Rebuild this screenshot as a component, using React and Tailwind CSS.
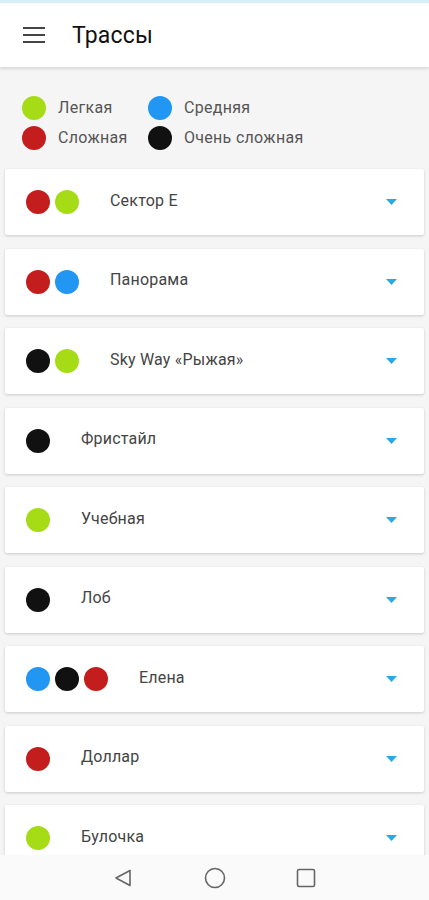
import React from "react";

const C = {
  g: "bg-[#a5dc16]",
  r: "bg-[#c41d1d]",
  b: "bg-[#2196f3]",
  k: "bg-[#111111]",
};

const tracks = [
  { name: "Сектор Е", dots: ["r", "g"] },
  { name: "Панорама", dots: ["r", "b"] },
  { name: "Sky Way «Рыжая»", dots: ["k", "g"] },
  { name: "Фристайл", dots: ["k"] },
  { name: "Учебная", dots: ["g"] },
  { name: "Лоб", dots: ["k"] },
  { name: "Елена", dots: ["b", "k", "r"] },
  { name: "Доллар", dots: ["r"] },
  { name: "Булочка", dots: ["g"] },
];

function Dot({ c }) {
  return <span className={`block w-[24px] h-[24px] rounded-full ${C[c]}`} />;
}

export default function App() {
  return (
    <div
      className="w-[429px] h-[900px] flex flex-col overflow-hidden bg-[#f5f5f5]"
      style={{ fontFamily: "Roboto, 'Noto Sans', sans-serif" }}
    >
      <div className="h-[3px] bg-[#d6f1fa] shrink-0" />
      <header className="relative z-10 h-[64px] shrink-0 bg-white flex items-center shadow-[0_2px_3px_rgba(0,0,0,0.12)]">
        <div className="ml-[23px] w-[22px] flex flex-col gap-[5px]">
          <span className="block h-[2px] bg-[#444]" />
          <span className="block h-[2px] bg-[#444]" />
          <span className="block h-[2px] bg-[#444]" />
        </div>
        <h1 className="ml-[27px] text-[23px] text-[#111] leading-none tracking-[0.2px]">Трассы</h1>
      </header>

      <div className="flex-1 overflow-hidden">
        <div className="pt-[29px] pl-[22px] grid grid-cols-[126px_auto] gap-y-[6px] text-[16px] tracking-[0.3px] text-[#555]">
          <div className="flex items-center gap-[12px]"><Dot c="g" /><span>Легкая</span></div>
          <div className="flex items-center gap-[12px]"><Dot c="b" /><span>Средняя</span></div>
          <div className="flex items-center gap-[12px]"><Dot c="r" /><span>Сложная</span></div>
          <div className="flex items-center gap-[12px]"><Dot c="k" /><span>Очень сложная</span></div>
        </div>

        <div className="mt-[19px] px-[5px] flex flex-col gap-[13.5px]">
          {tracks.map((t) => (
            <div
              key={t.name}
              className="h-[66px] shrink-0 bg-white rounded-[2px] flex items-center shadow-[0_1px_3px_rgba(0,0,0,0.18)]"
            >
              <div className="ml-[21px] flex gap-[5px]">
                {t.dots.map((d, i) => (
                  <Dot key={i} c={d} />
                ))}
              </div>
              <span className="ml-[31px] text-[16px] tracking-[0.2px] text-[#444] flex-1 -mt-[3px]">{t.name}</span>
              <svg width="11" height="6" viewBox="0 0 11 6" className="mr-[27px]">
                <path d="M0 0 L11 0 L5.5 6 Z" fill="#29a9e6" />
              </svg>
            </div>
          ))}
        </div>
      </div>

      <nav className="h-[45px] shrink-0 bg-[#fafafa] flex items-center">
        <svg width="20" height="20" viewBox="0 0 20 20" className="ml-[113px]">
          <path d="M17 2.5 L17 17.5 L3 10 Z" fill="none" stroke="#666" strokeWidth="1.6" strokeLinejoin="round" />
        </svg>
        <svg width="22" height="22" viewBox="0 0 22 22" className="ml-[71px]">
          <circle cx="11" cy="11" r="9.5" fill="none" stroke="#666" strokeWidth="1.6" />
        </svg>
        <svg width="20" height="20" viewBox="0 0 20 20" className="ml-[70px]">
          <rect x="1.5" y="1.5" width="17" height="17" rx="1.5" fill="none" stroke="#666" strokeWidth="1.6" />
        </svg>
      </nav>
    </div>
  );
}
